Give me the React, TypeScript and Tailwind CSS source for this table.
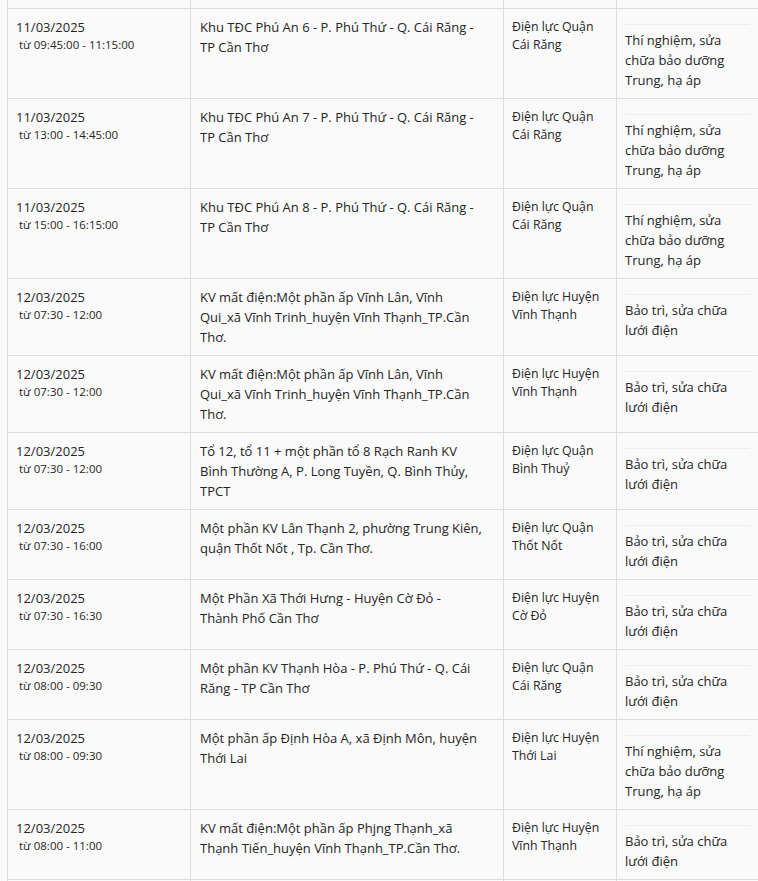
const rows = [
  {
    date: "11/03/2025",
    time: "từ 09:45:00 - 11:15:00",
    area: ["Khu TĐC Phú An 6 - P. Phú Thứ - Q. Cái Răng -", "TP Cần Thơ"],
    unit: ["Điện lực Quận", "Cái Răng"],
    reason: ["Thí nghiệm, sửa", "chữa bảo dưỡng", "Trung, hạ áp"],
  },
  {
    date: "11/03/2025",
    time: "từ 13:00 - 14:45:00",
    area: ["Khu TĐC Phú An 7 - P. Phú Thứ - Q. Cái Răng -", "TP Cần Thơ"],
    unit: ["Điện lực Quận", "Cái Răng"],
    reason: ["Thí nghiệm, sửa", "chữa bảo dưỡng", "Trung, hạ áp"],
  },
  {
    date: "11/03/2025",
    time: "từ 15:00 - 16:15:00",
    area: ["Khu TĐC Phú An 8 - P. Phú Thứ - Q. Cái Răng -", "TP Cần Thơ"],
    unit: ["Điện lực Quận", "Cái Răng"],
    reason: ["Thí nghiệm, sửa", "chữa bảo dưỡng", "Trung, hạ áp"],
  },
  {
    date: "12/03/2025",
    time: "từ 07:30 - 12:00",
    area: [
      "KV mất điện:Một phần ấp Vĩnh Lân, Vĩnh",
      "Qui_xã Vĩnh Trinh_huyện Vĩnh Thạnh_TP.Cần",
      "Thơ.",
    ],
    unit: ["Điện lực Huyện", "Vĩnh Thạnh"],
    reason: ["Bảo trì, sửa chữa", "lưới điện"],
  },
  {
    date: "12/03/2025",
    time: "từ 07:30 - 12:00",
    area: [
      "KV mất điện:Một phần ấp Vĩnh Lân, Vĩnh",
      "Qui_xã Vĩnh Trinh_huyện Vĩnh Thạnh_TP.Cần",
      "Thơ.",
    ],
    unit: ["Điện lực Huyện", "Vĩnh Thạnh"],
    reason: ["Bảo trì, sửa chữa", "lưới điện"],
  },
  {
    date: "12/03/2025",
    time: "từ 07:30 - 12:00",
    area: [
      "Tổ 12, tổ 11 + một phần tổ 8 Rạch Ranh KV",
      "Bình Thường A, P. Long Tuyền, Q. Bình Thủy,",
      "TPCT",
    ],
    unit: ["Điện lực Quận", "Bình Thuỷ"],
    reason: ["Bảo trì, sửa chữa", "lưới điện"],
  },
  {
    date: "12/03/2025",
    time: "từ 07:30 - 16:00",
    area: [
      "Một phần KV Lân Thạnh 2, phường Trung Kiên,",
      "quận Thốt Nốt , Tp. Cần Thơ.",
    ],
    unit: ["Điện lực Quận", "Thốt Nốt"],
    reason: ["Bảo trì, sửa chữa", "lưới điện"],
  },
  {
    date: "12/03/2025",
    time: "từ 07:30 - 16:30",
    area: ["Một Phần Xã Thới Hưng - Huyện Cờ Đỏ -", "Thành Phố Cần Thơ"],
    unit: ["Điện lực Huyện", "Cờ Đỏ"],
    reason: ["Bảo trì, sửa chữa", "lưới điện"],
  },
  {
    date: "12/03/2025",
    time: "từ 08:00 - 09:30",
    area: [
      "Một phần KV Thạnh Hòa - P. Phú Thứ - Q. Cái",
      "Răng - TP Cần Thơ",
    ],
    unit: ["Điện lực Quận", "Cái Răng"],
    reason: ["Bảo trì, sửa chữa", "lưới điện"],
  },
  {
    date: "12/03/2025",
    time: "từ 08:00 - 09:30",
    area: ["Một phần ấp Định Hòa A, xã Định Môn, huyện", "Thới Lai"],
    unit: ["Điện lực Huyện", "Thới Lai"],
    reason: ["Thí nghiệm, sửa", "chữa bảo dưỡng", "Trung, hạ áp"],
  },
  {
    date: "12/03/2025",
    time: "từ 08:00 - 11:00",
    area: [
      "KV mất điện:Một phần ấp Phjng Thạnh_xã",
      "Thạnh Tiến_huyện Vĩnh Thạnh_TP.Cần Thơ.",
    ],
    unit: ["Điện lực Huyện", "Vĩnh Thạnh"],
    reason: ["Bảo trì, sửa chữa", "lưới điện"],
  },
];

function Lines({ lines }: { lines: string[] }) {
  return (
    <>
      {lines.map((l, i) => (
        <div key={i} className="whitespace-nowrap">
          {l}
        </div>
      ))}
    </>
  );
}

export default function App() {
  const cell = "border border-[#dddddd] align-top px-2 pt-2 pb-2";

  return (
    <div className="min-h-screen bg-[#fafafa] pl-[7px] overflow-hidden font-['Open_Sans',sans-serif] text-[13px] leading-5 text-[#252525]">
      <table className="table-fixed border-collapse w-[751px]">
        <colgroup>
          <col className="w-[183px]" />
          <col className="w-[313px]" />
          <col className="w-[113px]" />
          <col className="w-[142px]" />
        </colgroup>
        <tbody>
          {/* tail of the previous row */}
          <tr className="h-[8px]">
            <td className="border border-t-0 border-[#dddddd] p-0"></td>
            <td className="border border-t-0 border-[#dddddd] p-0"></td>
            <td className="border border-t-0 border-[#dddddd] p-0"></td>
            <td className="border border-t-0 border-[#dddddd] p-0"></td>
          </tr>

          {rows.map((r, i) => (
            <tr key={i}>
              <td className={cell}>
                <div className="text-[13px] leading-5">{r.date}</div>
                <div className="ml-[3px] text-[11.5px] leading-4">
                  {r.time}
                </div>
              </td>
              <td className={cell + " pl-[9px]"}>
                <Lines lines={r.area} />
              </td>
              <td className={cell + " pt-[9px] text-[12.3px] leading-[18px]"}>
                <Lines lines={r.unit} />
              </td>
              <td className={cell}>
                <div className="mt-[7px] border-t border-[#eeeeee] pt-[5px]">
                  <Lines lines={r.reason} />
                </div>
              </td>
            </tr>
          ))}

          <tr className="h-[20px]">
            <td className="border border-[#dddddd] p-0"></td>
            <td className="border border-[#dddddd] p-0"></td>
            <td className="border border-[#dddddd] p-0"></td>
            <td className="border border-[#dddddd] p-0"></td>
          </tr>
        </tbody>
      </table>
    </div>
  );
}
